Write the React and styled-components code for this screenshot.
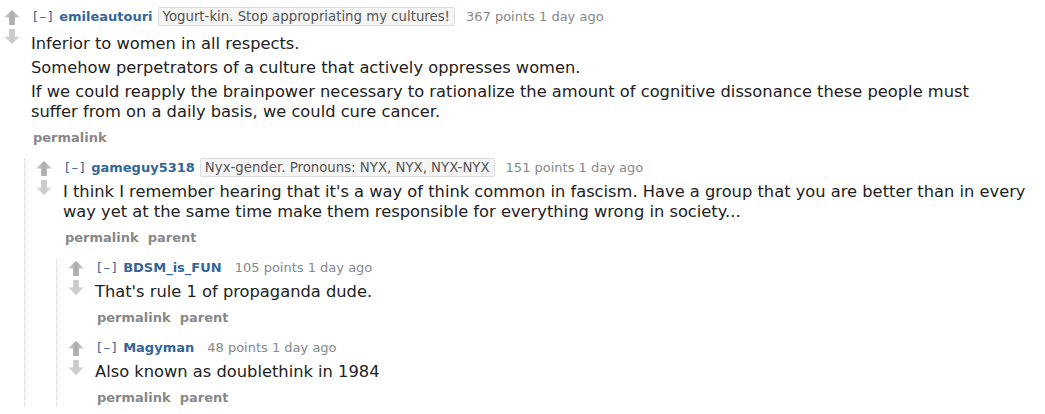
import React from "react";
import styled, { createGlobalStyle } from "styled-components";

const Global = createGlobalStyle`
  html, body { margin: 0; padding: 0; background: #fff; }
  body { font-family: "DejaVu Sans", Verdana, sans-serif; color: #222; }
`;

const Page = styled.div`
  padding: 8px 0 0 0;
  width: 1045px;
  box-sizing: border-box;
`;

const CommentBox = styled.div`
  margin-top: ${(p) => (p.$first ? "0" : "13px")};
`;

const Row = styled.div`
  display: flex;
  align-items: flex-start;
`;

const Midcol = styled.div`
  display: flex;
  flex-direction: column;
  align-items: center;
  gap: 4px;
  width: 16px;
  margin: 0 11px 0 4px;
  padding-top: 2px;
  flex: none;
`;

const Entry = styled.div`
  flex: 1;
  min-width: 0;
`;

const Tagline = styled.div`
  font-size: 13px;
  line-height: 18px;
  color: #888;
  white-space: nowrap;
`;

const Expand = styled.span`
  color: #369;
  letter-spacing: 1.5px;
  margin: 0 5px 0 2px;
`;

const Author = styled.span`
  color: #369;
  font-weight: bold;
  margin-right: 5px;
`;

const Flair = styled.span`
  background: #f5f5f5;
  border: 1px solid #ddd;
  border-radius: 2px;
  color: #545454;
  font-size: 13.3px;
  padding: 1px 4px;
  margin-right: 11px;
`;

const Score = styled.span`
  margin-left: ${(p) => (p.$afterFlair ? "0" : "8px")};
`;

const Body = styled.div`
  margin-top: ${(p) => (p.$top ? "8px" : "5px")};
  max-width: 975px;
  font-size: 16.3px;
  line-height: 20px;
  color: #222;
`;

const Para = styled.p`
  margin: 0;
  & + & { margin-top: 4px; }
`;

const Buttons = styled.div`
  display: flex;
  gap: 9px;
  margin-top: 8px;
  padding-left: 2px;
  font-size: 13px;
  line-height: 16px;
  font-weight: bold;
  color: #888;
`;

const Children = styled.div`
  margin-left: 24px;
  border-left: 1px dotted #c9c9e0;
  padding-left: 7px;
`;

function Arrow({ down }) {
  const id = down ? "gd" : "gu";
  return (
    <svg width="16" height="15" viewBox="0 0 16 15">
      <defs>
        <linearGradient id={id} x1="0" y1="0" x2="1" y2="0">
          <stop offset="0" stopColor={down ? "#dedede" : "#d2d2d2"} />
          <stop offset="0.5" stopColor={down ? "#c8c8c8" : "#ababab"} />
          <stop offset="1" stopColor={down ? "#dedede" : "#d2d2d2"} />
        </linearGradient>
      </defs>
      <path
        d="M8 0 L16 7.5 L11 7.5 L11 15 L5 15 L5 7.5 L0 7.5 Z"
        fill={`url(#${id})`}
        transform={down ? "rotate(180 8 7.5)" : undefined}
      />
    </svg>
  );
}

const data = [
  {
    author: "emileautouri",
    flair: "Yogurt-kin. Stop appropriating my cultures!",
    points: 367,
    body: [
      "Inferior to women in all respects.",
      "Somehow perpetrators of a culture that actively oppresses women.",
      "If we could reapply the brainpower necessary to rationalize the amount of cognitive dissonance these people must suffer from on a daily basis, we could cure cancer.",
    ],
    buttons: ["permalink"],
    children: [
      {
        author: "gameguy5318",
        flair: "Nyx-gender. Pronouns: NYX, NYX, NYX-NYX",
        points: 151,
        body: [
          "I think I remember hearing that it's a way of think common in fascism. Have a group that you are better than in every way yet at the same time make them responsible for everything wrong in society...",
        ],
        buttons: ["permalink", "parent"],
        children: [
          {
            author: "BDSM_is_FUN",
            points: 105,
            body: ["That's rule 1 of propaganda dude."],
            buttons: ["permalink", "parent"],
            children: [],
          },
          {
            author: "Magyman",
            points: 48,
            body: ["Also known as doublethink in 1984"],
            buttons: ["permalink", "parent"],
            children: [],
          },
        ],
      },
    ],
  },
];

function Comment({ c, first, depth }) {
  return (
    <CommentBox $first={first}>
      <Row>
        <Midcol>
          <Arrow />
          <Arrow down />
        </Midcol>
        <Entry>
          <Tagline>
            <Expand>[–]</Expand>
            <Author>{c.author}</Author>
            {c.flair && <Flair>{c.flair}</Flair>}
            <Score $afterFlair={!!c.flair}>{c.points} points 1 day ago</Score>
          </Tagline>
          <Body $top={depth === 0}>
            {c.body.map((p, i) => (
              <Para key={i}>{p}</Para>
            ))}
          </Body>
          <Buttons>
            {c.buttons.map((b) => (
              <span key={b}>{b}</span>
            ))}
          </Buttons>
        </Entry>
      </Row>
      {c.children.length > 0 && (
        <Children>
          {c.children.map((ch) => (
            <Comment key={ch.author} c={ch} first={false} depth={depth + 1} />
          ))}
        </Children>
      )}
    </CommentBox>
  );
}

export default function App() {
  return (
    <>
      <Global />
      <Page>
        {data.map((c, i) => (
          <Comment key={c.author} c={c} first={i === 0} depth={0} />
        ))}
      </Page>
    </>
  );
}
